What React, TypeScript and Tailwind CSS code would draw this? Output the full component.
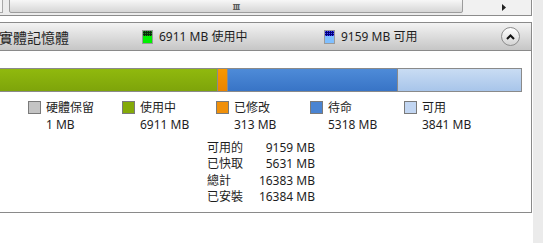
import React from 'react';

const font = { fontFamily: '"Segoe UI", "Noto Sans", "Noto Sans CJK TC", sans-serif' };

const legend = [
  { label: '硬體保留', value: '1 MB', box: 'bg-[#c4c4c4]' },
  { label: '使用中', value: '6911 MB', box: 'bg-[#84aa08]' },
  { label: '已修改', value: '313 MB', box: 'bg-[#f0900a]' },
  { label: '待命', value: '5318 MB', box: 'bg-[#4a84d2]' },
  { label: '可用', value: '3841 MB', box: 'bg-[#c2d6f2]' },
];

const stats = [
  ['可用的', '9159 MB'],
  ['已快取', '5631 MB'],
  ['總計', '16383 MB'],
  ['已安裝', '16384 MB'],
];

function MiniGraph({ top, dot, bottom }: { top: string; dot: string; bottom: string }) {
  return (
    <svg width="11" height="14" viewBox="0 0 11 14" className="shrink-0">
      <rect x="0.5" y="0.5" width="10" height="13" fill="#fff" stroke="#9a9a9a" />
      <rect x="1" y="1" width="9" height="5" fill={top} />
      {[1, 3, 5, 7, 9].map((x) => [1, 3, 5].map((y) => <rect key={`${x}-${y}`} x={x} y={y} width="1" height="1" fill={dot} />))}
      <rect x="1" y="6" width="9" height="7" fill={bottom} />
    </svg>
  );
}

export default function App() {
  return (
    <div className="w-[543px] h-[243px] bg-white flex overflow-hidden text-[12px] text-[#1e1e1e]" style={font}>
      <div className="w-[532px] shrink-0 flex flex-col">
        {/* scrollbar strip */}
        <div className="h-[16px] border-r border-b border-[#8c8c8c] bg-[#ececec] flex items-start">
          <div className="w-[3px] h-[13px] border-r border-b border-[#a8a8a8] bg-[#f4f4f4]" />
          <div className="w-[6px]" />
          <div className="w-[454px] h-[14px] -mt-px rounded-b-[2px] border border-[#9c9c9c] bg-gradient-to-b from-[#f7f7f7] to-[#d6d6d6] flex items-center justify-center">
            <span className="text-[8px] leading-none tracking-[-1px] text-[#555] font-bold mt-[2px]">III</span>
          </div>
          <div className="flex-1 h-[15px] bg-[#f1f1f1] flex items-center justify-end pr-[25px]">
            <svg width="4" height="7" viewBox="0 0 4 7"><path d="M0 0 L4 3.5 L0 7Z" fill="#222" /></svg>
          </div>
        </div>
        <div className="h-[6px]" />
        {/* panel */}
        <div className="h-[191px] border-t border-r border-b border-[#8a8a8a] flex flex-col">
          <div className="h-[28px] border-b border-[#8a8a8a] bg-gradient-to-b from-[#f3f3f3] to-[#c6c6c6] flex items-center">
            <span className="-ml-[1px] w-[143px] text-[14px] leading-none" style={{ fontFamily: '"Noto Sans CJK TC", sans-serif' }}>實體記憶體</span>
            <MiniGraph top="#0a2a0a" dot="#1a8a1a" bottom="#00f000" />
            <span className="ml-[6px] w-[165px] mt-px">6911 MB 使用中</span>
            <MiniGraph top="#00007a" dot="#4a4aff" bottom="#7fbfff" />
            <span className="ml-[6px] mt-px">9159 MB 可用</span>
            <div className="ml-auto mr-[11px] w-[19px] h-[19px] rounded-full border border-[#8d8d8d] bg-gradient-to-b from-white to-[#d4d4d4] flex items-center justify-center">
              <svg width="9" height="6" viewBox="0 0 9 6"><path d="M1 5 L4.5 1.5 L8 5" stroke="#111" strokeWidth="2" fill="none" /></svg>
            </div>
          </div>
          {/* bar */}
          <div className="mt-[17px] mr-[9px] h-[24px] border-y border-r border-[#8a8a8a] flex">
            <div className="w-[218px] bg-gradient-to-b from-[#90b90e] to-[#7ea40a] border-r border-[#8a8a8a]" />
            <div className="w-[10px] bg-gradient-to-b from-[#f89800] to-[#e88400] border-r border-[#8a8a8a]" />
            <div className="w-[170px] bg-gradient-to-b from-[#4e8bd8] to-[#3874c6] border-r border-[#8a8a8a]" />
            <div className="flex-1 bg-gradient-to-b from-[#c9dcf3] to-[#a8c5ea]" />
          </div>
          {/* legend */}
          <div className="mt-[7px] ml-[28px] flex">
            {legend.map((l) => (
              <div key={l.label} className="w-[94px] grid grid-cols-[13px_auto] gap-x-[5px] leading-[17px]">
                <div className={`w-[13px] h-[13px] mt-[2px] border border-[#7a7a7a] ${l.box}`} />
                <span>{l.label}</span>
                <span />
                <span>{l.value}</span>
              </div>
            ))}
          </div>
          {/* totals */}
          <div className="mt-[7px] ml-[207px] grid grid-cols-[auto_auto] w-[108px] leading-[16.4px]">
            {stats.map(([k, v]) => (
              <React.Fragment key={k}>
                <span>{k}</span>
                <span className="text-right">{v}</span>
              </React.Fragment>
            ))}
          </div>
        </div>
      </div>
      <div className="w-px shrink-0" />
      <div className="flex-1 bg-[#ebebeb]" />
    </div>
  );
}
